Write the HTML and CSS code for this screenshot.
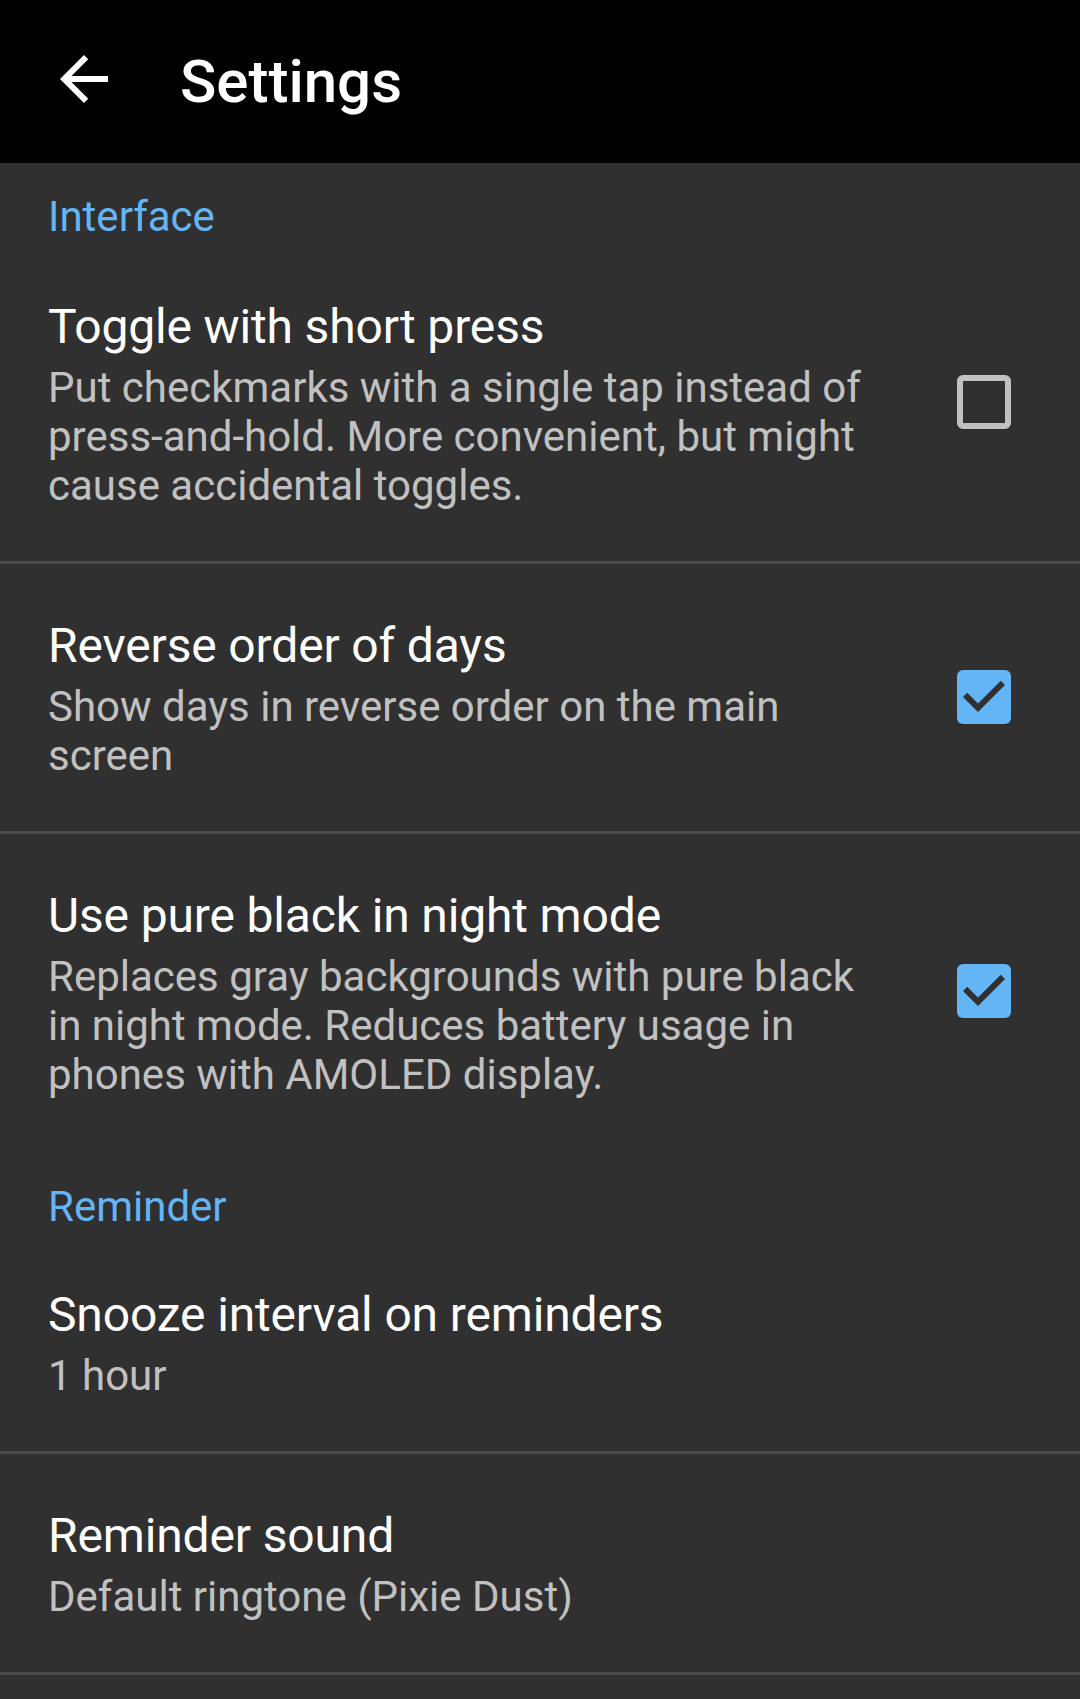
FILE: index.html
```html
<!DOCTYPE html>
<html lang="en">
<head>
<meta charset="utf-8">
<title>Settings</title>
<link rel="stylesheet" href="styles.css">
</head>
<body>
<header class="toolbar">
  <svg class="back" viewBox="0 0 24 24" width="72" height="72" aria-hidden="true">
    <path d="M20 11H7.83l5.59-5.59L12 4l-8 8 8 8 1.41-1.41L7.83 13H20v-2z" fill="#ffffff"/>
  </svg>
  <h1 class="toolbar-title">Settings</h1>
</header>

<main class="list">
  <div class="category category--first">Interface</div>

  <div class="pref pref--divider">
    <div class="pref-text">
      <div class="pref-title">Toggle with short press</div>
      <div class="pref-summary">Put checkmarks with a single tap instead of press-and-hold. More convenient, but might cause accidental toggles.</div>
    </div>
    <div class="checkbox"></div>
  </div>

  <div class="pref pref--divider">
    <div class="pref-text">
      <div class="pref-title">Reverse order of days</div>
      <div class="pref-summary">Show days in reverse order on the main screen</div>
    </div>
    <div class="checkbox checkbox--on">
      <svg viewBox="3 3 18 18" width="54" height="54" aria-hidden="true">
        <path d="M10 17l-5-5 1.41-1.41L10 14.17l7.59-7.59L19 8l-9 9z" fill="#303030"/>
      </svg>
    </div>
  </div>

  <div class="pref">
    <div class="pref-text">
      <div class="pref-title">Use pure black in night mode</div>
      <div class="pref-summary">Replaces gray backgrounds with pure black in night mode. Reduces battery usage in phones with AMOLED display.</div>
    </div>
    <div class="checkbox checkbox--on">
      <svg viewBox="3 3 18 18" width="54" height="54" aria-hidden="true">
        <path d="M10 17l-5-5 1.41-1.41L10 14.17l7.59-7.59L19 8l-9 9z" fill="#303030"/>
      </svg>
    </div>
  </div>

  <div class="category">Reminder</div>

  <div class="pref pref--divider">
    <div class="pref-text">
      <div class="pref-title">Snooze interval on reminders</div>
      <div class="pref-summary">1 hour</div>
    </div>
  </div>

  <div class="pref pref--divider">
    <div class="pref-text">
      <div class="pref-title">Reminder sound</div>
      <div class="pref-summary">Default ringtone (Pixie Dust)</div>
    </div>
  </div>
</main>
</body>
</html>
```

FILE: styles.css
```css
* {
  box-sizing: border-box;
}

html, body {
  margin: 0;
  padding: 0;
  background: #303030;
  font-family: Roboto, "Noto Sans", "Liberation Sans", sans-serif;
}

.toolbar {
  height: 163px;
  background: #000000;
  display: flex;
  align-items: center;
}

.back {
  display: block;
  margin-left: 48px;
  margin-bottom: 6px;
  flex: none;
}

.toolbar-title {
  margin: 0 0 0 60px;
  font-size: 60px;
  font-weight: 500;
  line-height: 70px;
  color: #ffffff;
}

.list {
  display: flex;
  flex-direction: column;
}

.category {
  padding: 32px 48px 2px 48px;
  font-size: 42px;
  line-height: 49px;
  color: #64b5f6;
}

.category--first {
  padding-top: 29px;
  padding-bottom: 4px;
}

.pref {
  display: flex;
  align-items: center;
  padding: 53px 69px 51px 48px;
}

.pref--divider {
  border-bottom: 3px solid #4a4a4a;
}

.pref-text {
  flex: 1;
  min-width: 0;
  padding-right: 72px;
}

.pref-title {
  font-size: 48px;
  line-height: 57px;
  letter-spacing: -0.15px;
  color: #ffffff;
}

.pref-summary {
  margin-top: 8px;
  font-size: 42px;
  line-height: 49px;
  color: #c1c1c1;
}

.checkbox {
  flex: none;
  width: 54px;
  height: 54px;
  margin-bottom: 4px;
  border: 6px solid #c1c1c1;
  border-radius: 6px;
}

.checkbox--on {
  border: none;
  background: #64b5f6;
}

.checkbox--on svg {
  display: block;
}
```
